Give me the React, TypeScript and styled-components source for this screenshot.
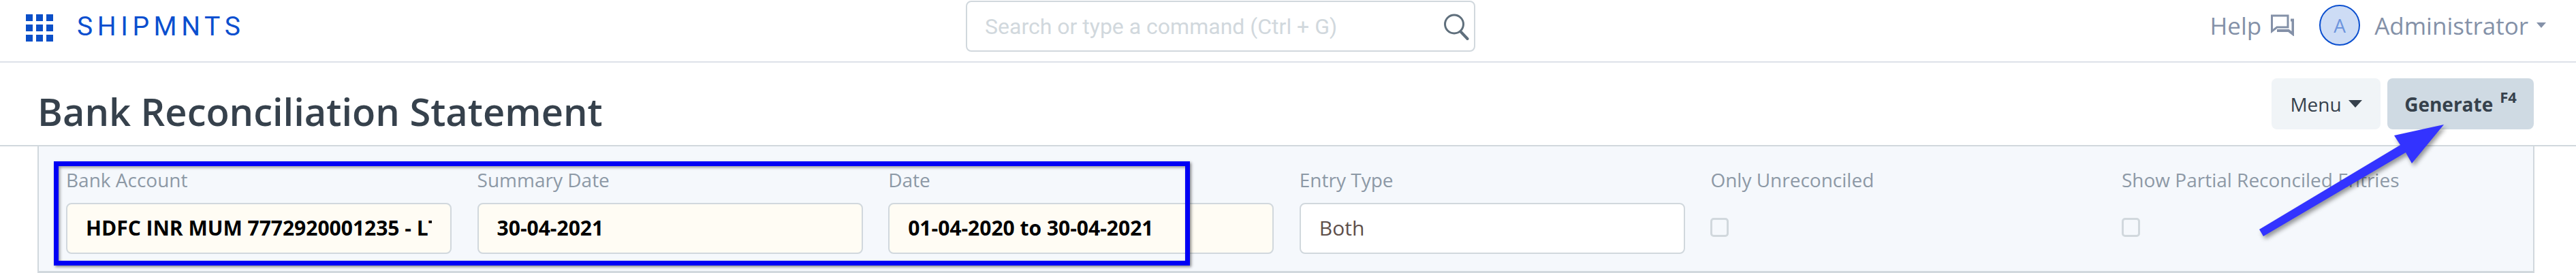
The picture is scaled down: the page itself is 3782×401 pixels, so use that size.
import React from "react";
import styled, { createGlobalStyle } from "styled-components";

const Global = createGlobalStyle`
  html, body { margin: 0; padding: 0; background: #fff; }
  body { font-family: "Open Sans", "Noto Sans", sans-serif; overflow: hidden; }
  * { box-sizing: border-box; }
`;
const Page = styled.div`
  position: relative;
  width: 3782px;
  height: 401px;
  overflow: hidden;
`;
const Navbar = styled.header`
  height: 92px;
  border-bottom: 2px solid #dde1e9;
  display: flex;
  align-items: center;
  padding: 0 44px 8px 38px;
`;
const Brand = styled.div`
  display: flex;
  align-items: center;
  gap: 35px;
`;
const BrandName = styled.span`
  font-family: Roboto, sans-serif;
  font-size: 39px;
  letter-spacing: 6.6px;
  color: #0b4fcf;
  line-height: 1;
  margin-top: -4px;
`;
const SearchBox = styled.div`
  position: absolute;
  left: 1418px;
  top: 1px;
  width: 748px;
  height: 75px;
  border: 2px solid #d1d8dd;
  border-radius: 8px;
  display: flex;
  align-items: center;
  justify-content: space-between;
  padding: 0 6px 0 26px;
`;
const Placeholder = styled.span`
  font-family: Roboto, sans-serif;
  font-size: 32px;
  color: #d1d8dd;
`;
const NavRight = styled.div`
  margin-left: auto;
  display: flex;
  align-items: center;
  font-size: 35px;
  color: #8491a8;
  margin-top: -8px;
`;
const Help = styled.div`
  display: flex;
  align-items: center;
  gap: 14px;
  margin-right: 37px;
`;
const Avatar = styled.div`
  width: 60px;
  height: 60px;
  border-radius: 50%;
  border: 2px solid #0b4fcf;
  background: #cddcf5;
  color: #6d95dd;
  display: flex;
  align-items: center;
  justify-content: center;
  font-size: 28px;
  margin-right: 21px;
`;
const SmallCaret = styled.span`
  width: 0;
  height: 0;
  margin-left: 12px;
  border-left: 7px solid transparent;
  border-right: 7px solid transparent;
  border-top: 8px solid #8491a8;
`;
const PageHead = styled.div`
  height: 123px;
  border-bottom: 2px solid #d1d8dd;
  display: flex;
  align-items: flex-start;
  justify-content: space-between;
  padding: 23px 62px 0 55px;
`;
const Title = styled.h1`
  margin: 15px 0 0;
  font-size: 56px;
  font-weight: 600;
  line-height: 1.2;
  color: #36414c;
`;
const Actions = styled.div`
  display: flex;
  gap: 10px;
`;
const Button = styled.div<{ $primary?: boolean }>`
  height: 75px;
  width: ${(p) => (p.$primary ? 215 : 160)}px;
  border-radius: 8px;
  background: ${(p) => (p.$primary ? "#cfdae3" : "#f0f4f7")};
  color: #36414c;
  font-size: 28px;
  font-weight: ${(p) => (p.$primary ? 700 : 400)};
  display: flex;
  align-items: center;
  justify-content: center;
  gap: 10px;
`;
const Sup = styled.span`
  font-size: 22px;
  font-weight: 700;
  align-self: flex-start;
  margin-top: 12px;
`;
const Caret = styled.span`
  width: 0;
  height: 0;
  border-left: 10px solid transparent;
  border-right: 10px solid transparent;
  border-top: 11px solid #36414c;
`;
const Panel = styled.section`
  margin-left: 55px;
  width: 3666px;
  height: 186px;
  background: #f5f8fc;
  border-left: 2px solid #d1d8dd;
  border-right: 2px solid #d1d8dd;
  border-bottom: 3px solid #d1d8dd;
  display: grid;
  grid-template-columns: repeat(6, 566px);
  column-gap: 37.6px;
  padding: 25px 0 0 40px;
`;
const Field = styled.div`
  display: flex;
  flex-direction: column;
`;
const Label = styled.label`
  font-size: 28px;
  line-height: 48px;
  height: 58px;
  color: #8d99a6;
  white-space: nowrap;
`;
const Input = styled.div<{ $filled?: boolean }>`
  height: 75px;
  border: 2px solid #d1d8dd;
  border-radius: 8px;
  background: ${(p) => (p.$filled ? "#fffcf4" : "#fff")};
  color: ${(p) => (p.$filled ? "#000" : "#5e4f4a")};
  font-size: 30px;
  font-weight: ${(p) => (p.$filled ? 700 : 400)};
  display: flex;
  align-items: center;
  padding: 0 27px 2px;
`;
const Value = styled.span`
  white-space: nowrap;
  overflow: hidden;
`;
const Check = styled.div`
  width: 27px;
  height: 28px;
  margin-top: 22px;
  border: 3px solid #d1d8dd;
  border-radius: 5px;
`;
const Highlight = styled.div`
  position: absolute;
  left: 79px;
  top: 237px;
  width: 1668px;
  height: 153px;
  border: 7px solid #0000f5;
  box-shadow: 2px 2px 4px rgba(0,0,0,.45), inset 2px 2px 4px rgba(0,0,0,.4);
`;
const ArrowSvg = styled.svg`
  position: absolute;
  left: 0;
  top: 0;
  filter: drop-shadow(3px 4px 3px rgba(0,0,0,.4));
`;

const fields = [
  { label: "Bank Account", value: "HDFC INR MUM 7772920001235 - LTD", filled: true },
  { label: "Summary Date", value: "30-04-2021", filled: true },
  { label: "Date", value: "01-04-2020 to 30-04-2021", filled: true },
  { label: "Entry Type", value: "Both", filled: false },
];

const Logo = () => (
  <svg width="40" height="40" viewBox="0 0 40 40" fill="#0b4fc8">
    {[0, 15, 30].map((y) =>
      [0, 15, 30].map((x) => <rect key={`${x}-${y}`} x={x} y={y} width="10" height="10" />)
    )}
  </svg>
);

const SearchIcon = () => (
  <svg width="40" height="40" viewBox="0 0 40 40" fill="none" stroke="#5f6f7c">
    <circle cx="17" cy="16.5" r="13.5" strokeWidth="3" />
    <path d="M27 28 L36.5 38" strokeWidth="4" strokeLinecap="round" />
  </svg>
);

const ChatIcon = () => (
  <svg width="34" height="32" viewBox="0 0 34 32" fill="none" stroke="#8491a8" strokeWidth="3">
    <path d="M1.5 2H25V19H9L1.5 25Z" />
    <path d="M29 8.5H32.5V29L26 24H9" strokeWidth="4" />
  </svg>
);

export default function App() {
  return (
    <Page>
      <Global />
      <Navbar>
        <Brand>
          <Logo />
          <BrandName>SHIPMNTS</BrandName>
        </Brand>
        <SearchBox>
          <Placeholder>Search or type a command (Ctrl + G)</Placeholder>
          <SearchIcon />
        </SearchBox>
        <NavRight>
          <Help>
            Help <ChatIcon />
          </Help>
          <Avatar>A</Avatar>
          Administrator
          <SmallCaret />
        </NavRight>
      </Navbar>
      <PageHead>
        <Title>Bank Reconciliation Statement</Title>
        <Actions>
          <Button>
            Menu <Caret />
          </Button>
          <Button $primary>
            Generate <Sup>F4</Sup>
          </Button>
        </Actions>
      </PageHead>
      <Panel>
        {fields.map((f) => (
          <Field key={f.label}>
            <Label>{f.label}</Label>
            <Input $filled={f.filled}>
              <Value>{f.value}</Value>
            </Input>
          </Field>
        ))}
        <Field>
          <Label>Only Unreconciled</Label>
          <Check />
        </Field>
        <Field>
          <Label>Show Partial Reconciled Entries</Label>
          <Check />
        </Field>
      </Panel>
      <Highlight />
      <ArrowSvg width="3782" height="401" viewBox="0 0 3782 401">
        <polygon points="3317,337 3524,213 3515,199 3588,183 3541,240 3532,224 3323,347" fill="#3333ff" />
      </ArrowSvg>
    </Page>
  );
}
